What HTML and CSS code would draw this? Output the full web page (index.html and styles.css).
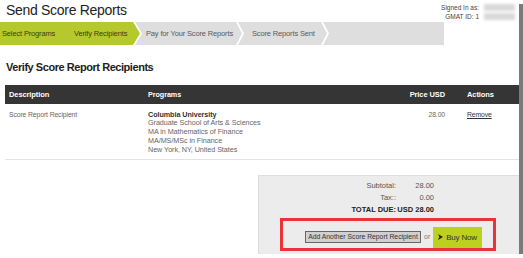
FILE: index.html
```
<!DOCTYPE html>
<html lang="en">
<head>
    <meta charset="UTF-8">
    <meta name="viewport" content="width=device-width, initial-scale=1.0">
    <title>Send Score Reports</title>
    <link rel="stylesheet" href="styles.css">
</head>
<body>
    <div class="frame">
        <header class="top">
            <h1 class="title">Send Score Reports</h1>
            <div class="account">
                <span class="account-label">Signed In as:</span><span class="blur"></span>
                <span class="account-label">GMAT ID: 1</span><span class="blur"></span>
            </div>
        </header>

        <!-- Progress steps -->
        <ol class="steps">
            <li class="step done s1">Select Programs</li>
            <li class="step done current s2">Verify Recipients</li>
            <li class="step s3">Pay for Your Score Reports</li>
            <li class="step s4">Score Reports Sent</li>
        </ol>

        <main class="content">
            <h2 class="page-heading">Verify Score Report Recipients</h2>

            <table class="recipients">
                <colgroup>
                    <col class="col-desc">
                    <col class="col-prog">
                    <col class="col-price">
                    <col class="col-act">
                </colgroup>
                <thead>
                    <tr>
                        <th class="c-desc">Description</th>
                        <th class="c-prog">Programs</th>
                        <th class="c-price">Price USD</th>
                        <th class="c-act">Actions</th>
                    </tr>
                </thead>
                <tbody>
                    <tr>
                        <td class="c-desc">Score Report Recipient</td>
                        <td class="c-prog">
                            <strong>Columbia University</strong><br>
                            Graduate School of Arts &amp; Sciences<br>
                            MA in Mathematics of Finance<br>
                            MA/MS/MSc in Finance<br>
                            New York, NY, United States
                        </td>
                        <td class="c-price">28.00</td>
                        <td class="c-act"><a href="#" class="remove">Remove</a></td>
                    </tr>
                </tbody>
            </table>

            <!-- Order summary -->
            <div class="summary">
                <dl class="totals">
                    <dt>Subtotal:</dt><dd>28.00</dd>
                    <dt>Tax::</dt><dd>0.00</dd>
                    <dt class="total">TOTAL DUE:</dt><dd class="total">USD 28.00</dd>
                </dl>
                <div class="checkout">
                    <button class="btn-add" type="button">Add Another Score Report Recipient</button>
                    <span class="or">or</span>
                    <button class="btn-buy" type="button">
                        <svg class="chev" width="5" height="6" viewBox="0 0 5 6"><polygon points="0,0 5,3 0,6 1.4,3" fill="#222"/></svg>
                        Buy Now
                    </button>
                </div>
            </div>
        </main>
    </div>
</body>
</html>
```

FILE: styles.css
```
* {
    margin: 0;
    padding: 0;
    box-sizing: border-box;
}

body {
    font-family: "Liberation Sans", Arial, sans-serif;
    background: #fff;
}

.frame {
    width: 519px;
    height: 254px;
    background: #fff;
    box-shadow: 4px 4px 0 #7a7a7a;
    overflow: hidden;
}

/* Header */
.top {
    display: flex;
    justify-content: space-between;
    height: 22px;
}

.title {
    font-size: 14px;
    font-weight: normal;
    line-height: 16px;
    letter-spacing: -0.3px;
    padding: 2px 0 0 6px;
    color: #222;
}

.account {
    display: grid;
    grid-template-columns: auto 31px;
    column-gap: 5px;
    align-items: center;
    align-content: start;
    padding-top: 3px;
    margin-right: 4px;
    font-size: 6.5px;
    line-height: 9px;
    color: #444;
    text-align: right;
}

.blur {
    height: 7px;
    background: #d9d9d9;
    filter: blur(1.5px);
}

/* Steps */
.steps {
    list-style: none;
    display: flex;
    width: 444px;
    height: 23px;
    background: #dedede;
    font-size: 7.5px;
    letter-spacing: -0.15px;
    line-height: 23px;
    color: #5a5a5a;
}

.step {
    position: relative;
    flex: none;
    white-space: nowrap;
}

.step.done {
    background: #b5c92c;
    color: #3a3f12;
}

.s1 { width: 64px; padding-left: 2px; }
.s2 { width: 69px; padding-left: 10px; }
.s3 { width: 103px; padding-left: 13px; }
.s4 { width: 85px; padding-left: 16px; }

.step::after {
    content: '';
    position: absolute;
    top: 0;
    left: 100%;
    width: 8px;
    height: 100%;
    background: #fff;
    clip-path: polygon(0 0, 2px 0, 8px 50%, 2px 100%, 0 100%, 6px 50%);
    z-index: 1;
}

.s1::after { display: none; }

.current::before {
    content: '';
    position: absolute;
    top: 0;
    left: 100%;
    width: 9px;
    height: 100%;
    background: #fff;
    clip-path: polygon(0 0, 2px 0, 9px 50%, 2px 100%, 0 100%, 7px 50%);
    z-index: 1;
}

.current::after {
    width: 7px;
    background: #b5c92c;
    clip-path: polygon(0 0, 100% 50%, 0 100%);
    z-index: 2;
}

/* Content */
.content {
    padding-left: 5px;
}

.page-heading {
    font-size: 11px;
    font-weight: bold;
    letter-spacing: -0.45px;
    line-height: 14px;
    margin: 15px 0 11px 1px;
    color: #222;
}

.recipients {
    width: 514px;
    border-collapse: collapse;
    table-layout: fixed;
}

.col-desc { width: 138px; }
.col-prog { width: 240px; }
.col-price { width: 66px; }
.col-act { width: 70px; }

.recipients th {
    background: #353535;
    color: #fff;
    font-size: 7.5px;
    letter-spacing: -0.1px;
    font-weight: bold;
    height: 19px;
    text-align: left;
}

.recipients td {
    vertical-align: top;
    padding-top: 6.5px;
    padding-bottom: 4.5px;
    font-size: 6.8px;
    letter-spacing: -0.1px;
    line-height: 8.75px;
    color: #666;
    border-bottom: 1px solid #e3e3e3;
}

.recipients .c-desc { padding-left: 4px; }
.recipients .c-prog { padding-left: 5px; font-size: 7.2px; letter-spacing: -0.05px; }
.recipients .c-price { padding-right: 4px; text-align: right; }
.recipients .c-act { padding-left: 18px; }

.c-prog strong {
    color: #333;
}

.remove {
    color: #333;
    text-decoration: underline;
}

/* Summary */
.summary {
    width: 261px;
    height: 79px;
    margin: 15px 0 0 auto;
    background: #ececec;
    border-left: 1px solid #d9d9d9;
    border-top: 1px solid #dedede;
    padding-top: 4px;
}

.totals {
    display: grid;
    grid-template-columns: 1fr minmax(38px, auto);
    padding-right: 85px;
    font-size: 7.5px;
    line-height: 12px;
    color: #555;
    white-space: nowrap;
}

.totals dt,
.totals dd {
    text-align: right;
}

.totals .total {
    font-weight: bold;
    color: #222;
}

.checkout {
    display: flex;
    align-items: flex-start;
    height: 33px;
    margin: 2px 23px 0 21px;
    padding: 6px 0 0 22px;
    border: 3px solid #e8333b;
}

.btn-add {
    width: 116px;
    height: 12px;
    margin-top: 4px;
    background: #d0d0d0;
    border: 1px solid #666;
    font-family: "Liberation Sans", Arial, sans-serif;
    font-size: 6.8px;
    line-height: 10px;
    color: #333;
    white-space: nowrap;
}

.or {
    margin: 5px 0 0 3px;
    font-size: 7px;
    line-height: 10px;
    color: #777;
}

.btn-buy {
    display: flex;
    align-items: center;
    gap: 3px;
    width: 49px;
    height: 21px;
    margin-left: 3px;
    padding-left: 5px;
    background: #bcd01f;
    border: none;
    font-family: "Liberation Sans", Arial, sans-serif;
    font-size: 8px;
    letter-spacing: -0.2px;
    color: #333;
    white-space: nowrap;
}
```
